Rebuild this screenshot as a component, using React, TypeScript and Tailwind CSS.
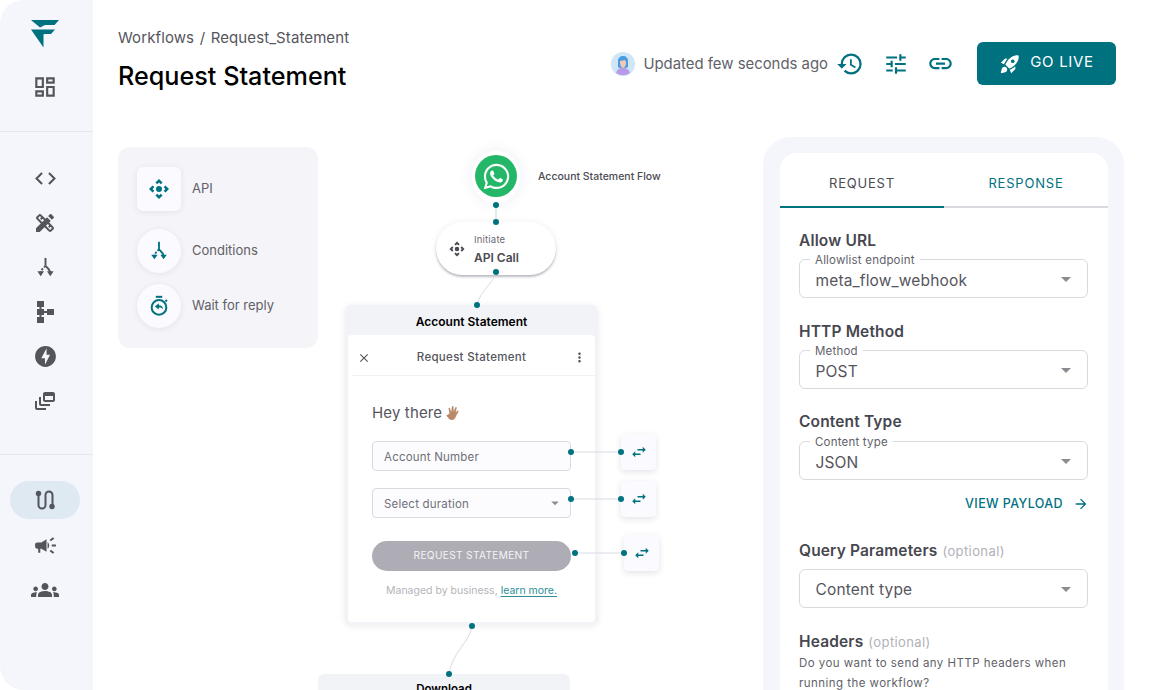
import React from "react";
import { FaWhatsapp } from "react-icons/fa";
import {
  MdOutlineDashboard, MdCode, MdDesignServices, MdSchema, MdOfflineBolt, MdOutlineDynamicFeed,
  MdCampaign, MdGroups, MdHistory, MdTune, MdLink, MdRocketLaunch, MdControlCamera,
  MdSwapHoriz, MdArrowForward, MdClose, MdMoreVert, MdArrowDropDown,
} from "react-icons/md";

const font = { fontFamily: "Inter, 'Noto Sans', sans-serif" };

function SplitIcon({ className }: { className?: string }) {
  return (
    <svg viewBox="0 0 24 24" className={className} fill="none" stroke="currentColor" strokeWidth="2">
      <path d="M12 2v8" />
      <path d="M12 10 C11 12 8 13 7 17" strokeDasharray="2.500 1.400" />
      <path d="M12 10 C13 12 16 13 17 17" />
      <path d="M3.500 16h7L7 21z" fill="currentColor" stroke="none" />
      <path d="M13.500 16h7L17 21z" fill="currentColor" stroke="none" />
    </svg>
  );
}

function TimerBack({ className }: { className?: string }) {
  return (
    <svg viewBox="0 0 24 24" className={className} fill="none" stroke="currentColor" strokeWidth="2.200">
      <circle cx="12" cy="13.500" r="8" />
      <path d="M8.500 2h7" />
      <path d="M19 5.500l1.600 1.600" />
      <path d="M7.500 12.500l4.300-3.600v2.400c2.800 0 4.400 1.600 4.800 4.200-1.100-1.400-2.500-1.900-4.800-1.800v2.200z" fill="currentColor" stroke="none" />
    </svg>
  );
}

function RouteIcon({ className }: { className?: string }) {
  return (
    <svg viewBox="0 0 20 20" className={className} fill="none" stroke="currentColor" strokeWidth="2">
      <path d="M3.500 4V15a3.500 3.500 0 0 0 7 0V5a3.500 3.500 0 0 1 7 0V16" />
      <circle cx="3.500" cy="3.500" r="2.700" fill="currentColor" stroke="none" />
      <circle cx="17" cy="16.500" r="2.700" fill="currentColor" stroke="none" />
    </svg>
  );
}

function Logo() {
  return (
    <svg viewBox="0 0 30 30" className="w-[30px] h-[30px]" fill="#00717f">
      <path d="M1 2h28l-4.500 5H15L10 9.500 1 2z" />
      <path d="M1 11.500h24l-4 4.500H14.500l-1 .5V29.500L1 11.500z" />
    </svg>
  );
}

function Avatar() {
  return (
    <svg viewBox="0 0 24 24" className="w-[24px] h-[24px]">
      <circle cx="12" cy="12" r="12" fill="#cfe6f7" />
      <path d="M5 21c1-4 4-5 7-5s6 1 7 5a12 12 0 0 1-14 0z" fill="#b79be8" />
      <path d="M7 15V9c0-3 2-5 5-5s5 2 5 5v6l-2 1H9z" fill="#4a9be0" />
      <path d="M9 9c2 0 4-1 5-1l1 2c0 3-1 6-3 6s-3-3-3-7z" fill="#f3c9b4" />
    </svg>
  );
}

function SideIcon({ children, active }: { children: React.ReactNode; active?: boolean }) {
  return (
    <div className={`flex items-center justify-center text-[#54545c] ${active ? "w-[70px] h-[38px] rounded-full bg-[#dee9f1]" : "w-[70px] h-[24px]"}`}>
      {children}
    </div>
  );
}

function Tool({ icon, label, round }: { icon: React.ReactNode; label: string; round?: boolean }) {
  return (
    <div className="flex items-center gap-[11px]">
      <div className={`w-[44px] h-[44px] flex items-center justify-center bg-[#fbfafe] text-[#00717f] shadow-[0_1px_6px_rgba(60,60,90,0.09)] ${round ? "rounded-full" : "rounded-[6px]"}`}>
        {icon}
      </div>
      <span className="text-[13px] text-[#5f5f68]">{label}</span>
    </div>
  );
}

function Field({ label, value, className }: { label?: string; value: string; className?: string }) {
  return (
    <div className={`relative h-[39px] rounded-[6px] border border-[#d9d9df] flex items-center pl-[15.5px] pr-[11px] ${className ?? ""}`}>
      {label && (
        <span className="absolute left-[10px] top-[-7px] px-[5px] bg-white text-[11.5px] leading-[14px] tracking-[0.2px] text-[#62626a]">{label}</span>
      )}
      <span className={`flex-1 text-[15.5px] tracking-[0.15px] text-[#55555d] ${label ? "pt-[5px]" : "pt-[3px]"}`}>{value}</span>
      <MdArrowDropDown className="w-[24px] h-[24px] text-[#8b8b92] -mr-[2px]" />
    </div>
  );
}

function Heading({ children, optional }: { children: string; optional?: boolean }) {
  return (
    <div className="pt-[1px] -mb-[1px] text-[15.5px] leading-[18px] tracking-[0.15px] font-semibold text-[#47474f]">
      {children}
      {optional && <span className="ml-[5px] text-[13px] font-normal tracking-[0.4px] text-[#b1b1b8]">(optional)</span>}
    </div>
  );
}

function SwapBox({ className }: { className: string }) {
  return (
    <div className={`absolute w-[35px] h-[36px] rounded-[4px] bg-[#fbfafe] flex items-center justify-center shadow-[0_2px_6px_rgba(60,60,90,0.14)] ${className}`}>
      <MdSwapHoriz className="w-[18px] h-[18px] text-[#00717f]" />
    </div>
  );
}

export default function App() {
  return (
    <div style={font} className="flex w-[1160px] h-[690px] overflow-hidden bg-white">
      <aside className="w-[93px] h-full shrink-0 bg-[#f5f5fc] rounded-l-[24px] flex flex-col items-center">
        <div className="h-[132px] w-full flex flex-col items-center border-b border-[#e7e7f0] pr-[3px]">
          <div className="mt-[18px]"><Logo /></div>
          <div className="mt-[26px]"><MdOutlineDashboard className="w-[26px] h-[26px] text-[#54545c]" /></div>
        </div>
        <div className="h-[323px] w-full flex flex-col items-center gap-[20.5px] pt-[34px] border-b border-[#e7e7f0] pr-[3px]">
          <SideIcon><MdCode className="w-[25px] h-[25px]" /></SideIcon>
          <SideIcon><MdDesignServices className="w-[24px] h-[24px]" /></SideIcon>
          <SideIcon><SplitIcon className="w-[23px] h-[23px]" /></SideIcon>
          <SideIcon><MdSchema className="w-[24px] h-[24px]" /></SideIcon>
          <SideIcon><MdOfflineBolt className="w-[25px] h-[25px]" /></SideIcon>
          <SideIcon><MdOutlineDynamicFeed className="w-[24px] h-[24px]" /></SideIcon>
        </div>
        <div className="w-full flex flex-col items-center pt-[26px] gap-[14px] pr-[3px]">
          <SideIcon active><RouteIcon className="w-[20px] h-[20px]" /></SideIcon>
          <SideIcon><MdCampaign className="w-[25px] h-[25px]" /></SideIcon>
          <div className="mt-[7px]"><SideIcon><MdGroups className="w-[28px] h-[28px]" /></SideIcon></div>
        </div>
      </aside>

      <div className="flex-1 min-w-0 flex flex-col">
        <header className="h-[137px] shrink-0 flex items-start justify-between pl-[25px] pr-[44px]">
          <div>
            <div className="mt-[29px] text-[15px] leading-[18px] tracking-[0.1px] text-[#55555d]">Workflows<span className="mx-[5.5px]">/</span>Request_Statement</div>
            <h1 className="mt-[13px] text-[25.2px] leading-[32px] font-medium text-black">Request Statement</h1>
          </div>
          <div className="flex items-center mt-[42px] h-[43px]">
            <Avatar />
            <span className="ml-[8px] pt-[2px] text-[14.9px] text-[#62626a]">Updated few seconds ago</span>
            <MdHistory className="ml-[8px] w-[28px] h-[28px] text-[#00717f]" />
            <MdTune className="ml-[19px] w-[26px] h-[26px] text-[#00717f]" />
            <MdLink className="ml-[18px] w-[27px] h-[27px] text-[#00717f]" />
            <button className="ml-[23px] w-[139px] h-[43px] rounded-[6px] bg-[#00717f] text-white flex items-center justify-center gap-[9px] text-[15px] font-normal tracking-[0.7px]">
              <MdRocketLaunch className="w-[22px] h-[22px]" />
              <span className="pb-[2px]">GO LIVE</span>
            </button>
          </div>
        </header>

        <div className="flex-1 min-h-0 flex pl-[25px] pr-[36px]">
          <div className="w-[200px] h-[201px] mt-[10px] shrink-0 rounded-[12px] bg-[#f5f4f8] px-[19px] pt-[20px] flex flex-col">
            <Tool icon={<MdControlCamera className="w-[24px] h-[24px]" />} label="API" />
            <div className="mt-[18px]"><Tool round icon={<SplitIcon className="w-[22px] h-[22px]" />} label="Conditions" /></div>
            <div className="mt-[11px]"><Tool round icon={<TimerBack className="w-[22px] h-[22px]" />} label="Wait for reply" /></div>
          </div>

          <div className="relative flex-1 min-w-0">
            <div className="absolute left-[154px] top-[14px] w-[48px] h-[52px] rounded-full shadow-[0_0_14px_rgba(120,120,170,0.12)]" />
            <div className="absolute left-[157px] top-[18px] w-[42px] h-[42px] rounded-full bg-[#25b768] flex items-center justify-center">
              <FaWhatsapp className="w-[29px] h-[29px] text-white" />
            </div>
            <div className="absolute left-[220px] top-[33px] text-[10.5px] leading-[14px] font-medium text-[#4b4b53]">Account Statement Flow</div>

            <div className="absolute left-[118px] top-[85px] w-[120px] h-[53px] rounded-full bg-white shadow-[0_2px_2px_rgba(60,60,80,0.3),0_0_6px_rgba(60,60,90,0.08)] flex items-center pl-[12px] gap-[8px]">
              <MdControlCamera className="w-[18px] h-[18px] text-[#4a4a52]" />
              <div className="flex flex-col">
                <span className="text-[9.5px] leading-[13px] tracking-[0.2px] text-[#6a6a72]">Initiate</span>
                <span className="mt-[4px] text-[12px] leading-[15px] font-semibold text-[#4a4a52]">API Call</span>
              </div>
            </div>

            <div className="absolute left-[27px] top-[168px] w-[253px] h-[320px] bg-[#f1f3f7] rounded-[6px] shadow-[0_1px_6px_rgba(60,60,90,0.1)] px-[3px] pb-[3px] flex flex-col">
              <div className="h-[30px] shrink-0 flex items-center justify-center pt-[3px] text-[12px] font-semibold text-black">Account Statement</div>
              <div className="flex-1 bg-white rounded-[4px] flex flex-col">
                <div className="h-[41px] shrink-0 border-b border-[#f1f1f4] flex items-center justify-between pt-[5px] pl-[9px] pr-[8px] ml-[4px]">
                  <MdClose className="w-[14px] h-[14px] text-[#55555d] -ml-[4px]" />
                  <span className="text-[11.5px] font-medium tracking-[0.3px] text-[#55555d]">Request Statement</span>
                  <MdMoreVert className="w-[15px] h-[15px] text-[#55555d]" />
                </div>
                <div className="px-[24px] flex flex-col">
                  <div className="mt-[28px] h-[18px] flex items-center gap-[3px] text-[15px] tracking-[0.15px] text-[#55555d]">
                    Hey there
                    <svg viewBox="0 0 16 16" className="w-[17px] h-[17px]" fill="#b98a68">
                      <path d="M2 9.500 4.200 8l-.9-4.600c-.1-.9 1.100-1.100 1.400-.3l1.100 3.600L6.600 1.500c.1-.9 1.300-.8 1.400.1l.2 4.500L9.700 2.300c.3-.8 1.500-.4 1.300.5L10 7l1.600-1.600c.6-.6 1.600.2 1 1l-2.300 4.100c-.6 2.200-1.800 3.500-3.900 3.500-1.500 0-2.700-.8-3.400-2.100L1.500 10.300c-.3-.5 0-.6.500-.8z" />
                    </svg>
                  </div>
                  <div className="mt-[19px] h-[30px] rounded-[4px] border border-[#d9d9df] bg-[#fcfcfe] flex items-center pl-[11px] pt-[3px] text-[11.5px] tracking-[0.2px] text-[#707078]">Account Number</div>
                  <div className="mt-[17px] h-[30px] rounded-[4px] border border-[#d9d9df] bg-[#fcfcfe] flex items-center pl-[11px] pr-[6px] text-[11.5px] tracking-[0.2px] text-[#707078]">
                    <span className="flex-1 pt-[3px]">Select duration</span>
                    <MdArrowDropDown className="w-[18px] h-[18px] text-[#8b8b92]" />
                  </div>
                  <div className="mt-[23px] h-[30px] rounded-full bg-[#aeacb4] flex items-center justify-center text-[10.2px] tracking-[0.3px] text-[#f4f4f6]">REQUEST STATEMENT</div>
                  <div className="mt-[13px] text-center text-[10.5px] leading-[14px] text-[#b4b4ba]">
                    Managed by business, <span className="text-[#2c8f99] underline underline-offset-2">learn more.</span>
                  </div>
                </div>
              </div>
            </div>

            <SwapBox className="left-[303px] top-[297px]" />
            <SwapBox className="left-[303px] top-[344px]" />
            <SwapBox className="left-[306px] top-[398px]" />

            <div className="absolute left-[0px] top-[537px] w-[252px] h-[40px] bg-[#f1f3f7] rounded-t-[6px] flex justify-center pt-[8px] text-[11.5px] leading-[14px] font-semibold text-black">Download</div>

            <svg className="absolute inset-0 w-full h-full pointer-events-none" fill="none">
              <g stroke="#d7dbe1" strokeWidth="1">
                <path d="M178 68V85" stroke="#b9dbe2" />
                <path d="M178 135C176 146 163 152 159 168" />
                <path d="M253 315H303" />
                <path d="M253 362H303" />
                <path d="M257 416H306" />
                <path d="M154 489C152 505 134 515 131 537" />
              </g>
              <g fill="#00717f">
                <circle cx="178" cy="68" r="3" />
                <circle cx="178" cy="85" r="3" />
                <circle cx="178" cy="135" r="3" />
                <circle cx="159" cy="168" r="3" />
                <circle cx="253" cy="315" r="3" />
                <circle cx="303" cy="315" r="3" />
                <circle cx="253" cy="362" r="3" />
                <circle cx="303" cy="362" r="3" />
                <circle cx="257" cy="416" r="3" />
                <circle cx="306" cy="416" r="3" />
                <circle cx="154" cy="489" r="3" />
                <circle cx="131" cy="537" r="3" />
              </g>
            </svg>
          </div>

          <div className="w-[361px] shrink-0 rounded-t-[28px] bg-[#f5f5fc] pl-[17px] pr-[16px] pt-[16px]">
            <div className="h-[600px] rounded-t-[16px] bg-white">
              <div className="flex h-[55px] border-b-2 border-[#d9d9df]">
                <div className="w-[164px] -mb-[2px] border-b-2 border-[#00717f] flex items-center justify-center pt-[9px] text-[13px] tracking-[0.8px] text-[#4b4b53]">REQUEST</div>
                <div className="flex-1 flex items-center justify-center pt-[9px] text-[13px] tracking-[0.8px] text-[#00717f]">RESPONSE</div>
              </div>
              <div className="pl-[19px] pr-[20px] pt-[23px]">
                <Heading>Allow URL</Heading>
                <Field className="mt-[10px]" label="Allowlist endpoint" value="meta_flow_webhook" />
                <div className="mt-[24px]"><Heading>HTTP Method</Heading></div>
                <Field className="mt-[10px]" label="Method" value="POST" />
                <div className="mt-[23px]"><Heading>Content Type</Heading></div>
                <Field className="mt-[11px]" label="Content type" value="JSON" />
                <div className="mt-[15px] -mr-[1px] h-[18px] flex items-center justify-end gap-[10px] text-[12.5px] font-medium tracking-[0.4px] text-[#00717f]">
                  VIEW PAYLOAD
                  <MdArrowForward className="w-[16px] h-[16px]" />
                </div>
                <div className="mt-[28px]"><Heading optional>Query Parameters</Heading></div>
                <Field className="mt-[10px]" value="Content type" />
                <div className="mt-[24px]"><Heading optional>Headers</Heading></div>
                <p className="mt-[3px] text-[11.5px] leading-[20px] tracking-[0.45px] text-[#62626a]">Do you want to send any HTTP headers when running the workflow?</p>
              </div>
            </div>
          </div>
        </div>
      </div>
    </div>
  );
}
